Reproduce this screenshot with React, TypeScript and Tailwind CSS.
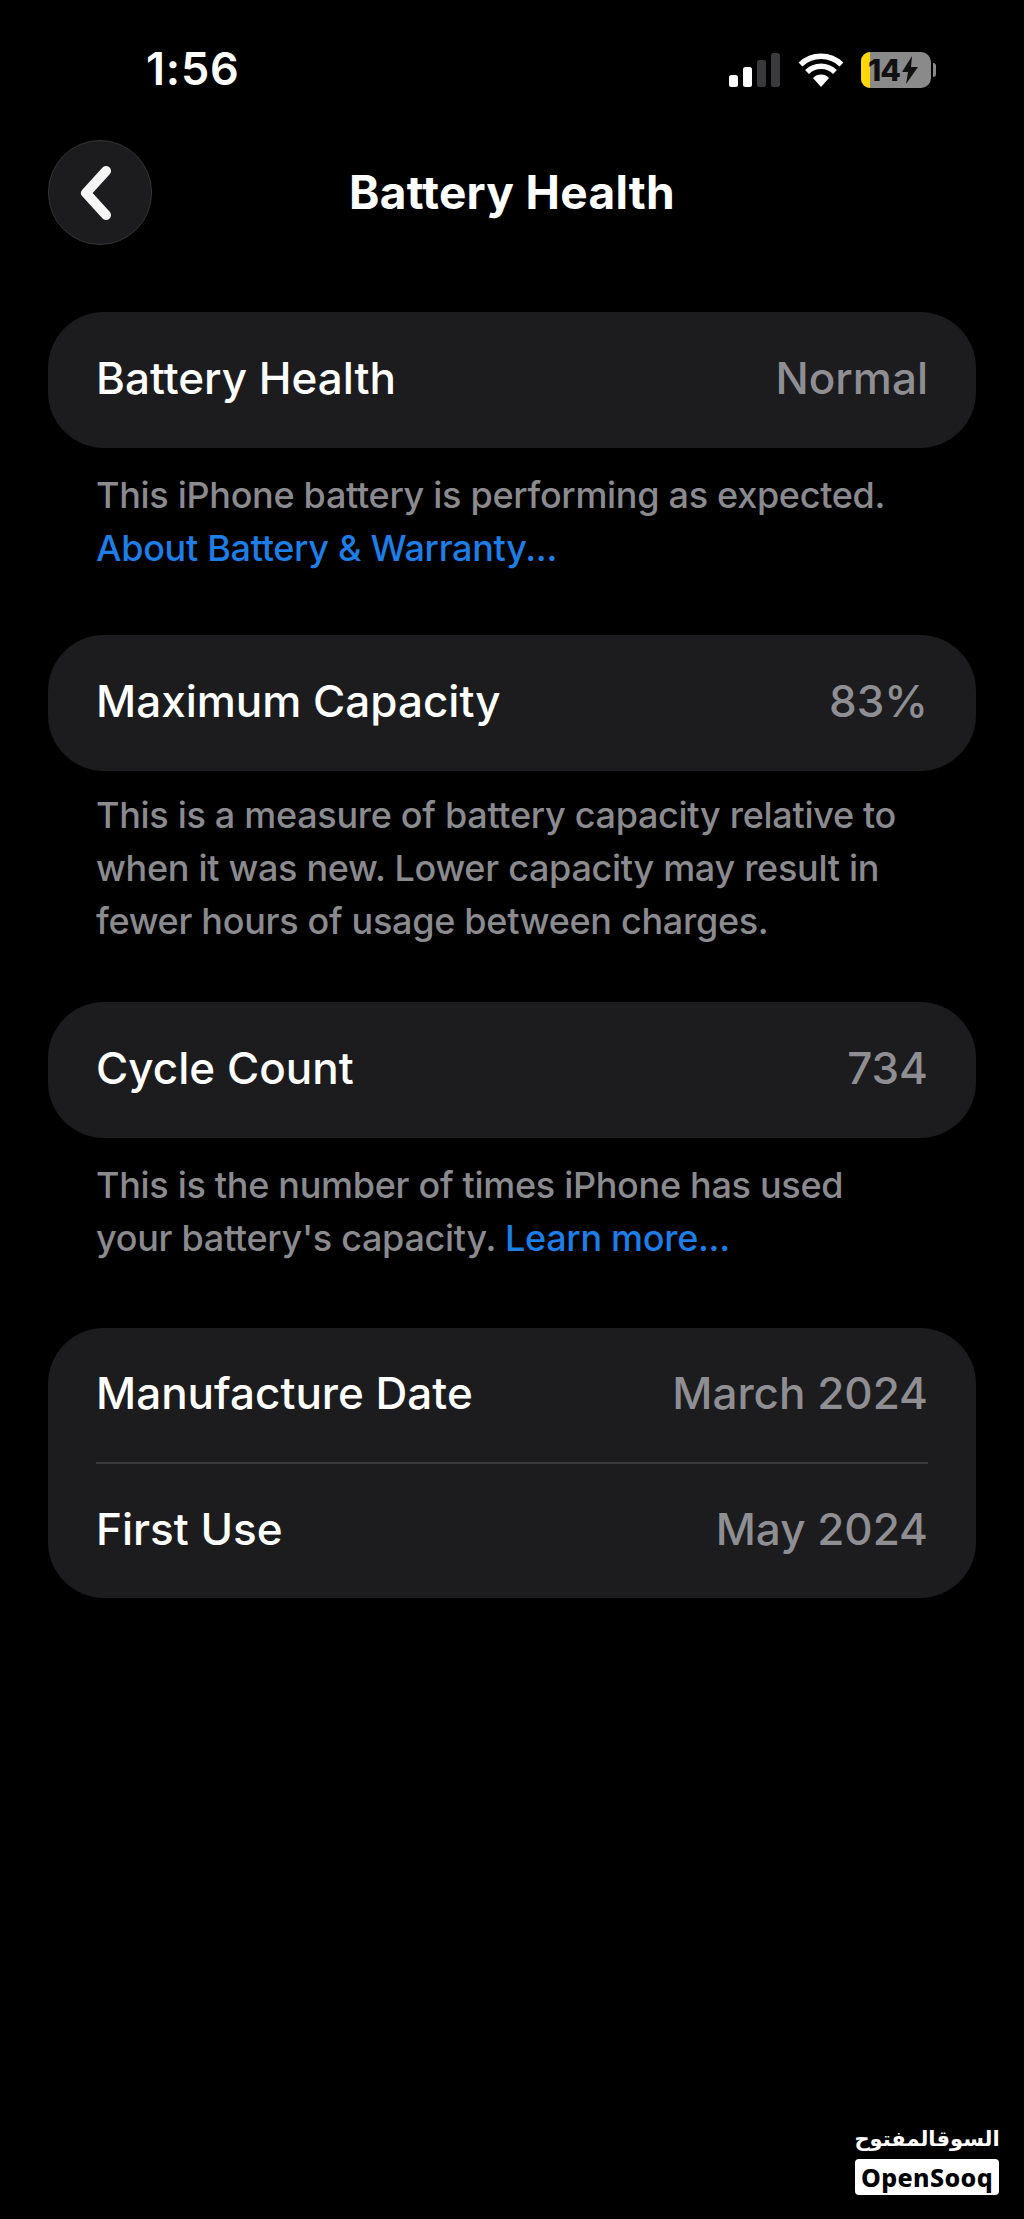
import type { ReactNode } from "react";

const FONT = "font-['Inter',sans-serif]";

function Row({ label, value, compact }: { label: string; value: string; compact?: boolean }) {
  return (
    <div className={`flex items-center justify-between pb-[4px] ${compact ? "h-[134px]" : "h-[136px]"}`}>
      <span className="text-[44px] font-medium text-white">{label}</span>
      <span className="text-[44px] font-medium text-[#8e8e93]">{value}</span>
    </div>
  );
}

function Card({ children }: { children: ReactNode }) {
  return <div className="rounded-[56px] bg-[#1c1c1e] px-[48px]">{children}</div>;
}

function Note({ children, tight }: { children: ReactNode; tight?: boolean }) {
  return (
    <p
      className={`px-[48px] text-[36px] font-medium leading-[53px] tracking-[-0.3px] text-[#8a8a8f] ${
        tight ? "pt-[18px]" : "pt-[21px]"
      }`}
    >
      {children}
    </p>
  );
}

function Link({ children }: { children: ReactNode }) {
  return <span className="text-[#1c7ee6]">{children}</span>;
}

function StatusBar() {
  return (
    <div className="flex h-[100px] items-end justify-between pb-[9px] pl-[146px] pr-[88px]">
      <span className="text-[45px] font-semibold leading-none tracking-[0.8px] text-white">1:56</span>
      <div className="mb-[3px] flex items-center gap-[17px]">
        <svg width="52" height="34" viewBox="0 0 52 34" aria-hidden="true">
          <rect x="0" y="22" width="9" height="12" rx="2.5" fill="#fff" />
          <rect x="14" y="14" width="9" height="20" rx="2.5" fill="#fff" />
          <rect x="28" y="7" width="9" height="27" rx="2.5" fill="#3a3a3c" />
          <rect x="42" y="0" width="9" height="34" rx="2.5" fill="#3a3a3c" />
        </svg>
        <svg width="46" height="34" viewBox="0 0 46 34" aria-hidden="true">
          <path d="M23 34l-8-9a11 11 0 0 1 16 0z" fill="#fff" />
          <path d="M9 19a20 20 0 0 1 28 0" fill="none" stroke="#fff" strokeWidth="5.5" />
          <path d="M2.5 11.5a29.5 29.5 0 0 1 41 0" fill="none" stroke="#fff" strokeWidth="5.5" />
        </svg>
        <div className="flex items-center gap-[2px]">
          <div className="relative flex h-[36px] w-[70px] items-center rounded-[10px] bg-[#8a8a8a]">
            <div className="absolute inset-y-0 left-0 w-[9px] rounded-l-[10px] bg-[#ffd60a]" />
            <span className="relative pl-[7px] text-[30px] font-extrabold leading-none tracking-[-1px] text-[#111]">14</span>
            <svg className="relative ml-[2px]" width="16" height="28" viewBox="0 0 16 28" aria-hidden="true">
              <path d="M10 0L0 16h6l-2 12L16 11H9z" fill="#111" />
            </svg>
          </div>
          <div className="h-[14px] w-[3px] rounded-r-full bg-[#8a8a8a]" />
        </div>
      </div>
    </div>
  );
}

export default function App() {
  return (
    <div className={`relative min-h-[2219px] bg-black ${FONT}`}>
      <StatusBar />

      <div className="relative flex h-[212px] items-center justify-center pb-[28px]">
        <button
          type="button"
          className="absolute left-[48px] top-[40px] flex h-[105px] w-[104px] items-center justify-center rounded-full border border-[#333] bg-[#1c1c1e]"
        >
          <svg width="40" height="56" viewBox="0 0 40 56" aria-hidden="true">
            <path d="M26 6L6 28l20 22" fill="none" stroke="#f5f5f5" strokeWidth="10" strokeLinecap="round" strokeLinejoin="round" />
          </svg>
        </button>
        <h1 className="text-[46px] font-bold tracking-[0.3px] text-white">Battery Health</h1>
      </div>

      <div className="px-[48px]">
        <Card>
          <Row label="Battery Health" value="Normal" />
        </Card>
        <Note>
          This iPhone battery is performing as expected.
          <br />
          <Link>About Battery &amp; Warranty...</Link>
        </Note>

        <div className="mt-[60px]">
          <Card>
            <Row label="Maximum Capacity" value="83%" />
          </Card>
        </div>
        <Note tight>
          This is a measure of battery capacity relative to
          <br />
          when it was new. Lower capacity may result in
          <br />
          fewer hours of usage between charges.
        </Note>

        <div className="mt-[54px]">
          <Card>
            <Row label="Cycle Count" value="734" />
          </Card>
        </div>
        <Note>
          This is the number of times iPhone has used
          <br />
          your battery's capacity. <Link>Learn more...</Link>
        </Note>

        <div className="mt-[63px]">
          <Card>
            <Row label="Manufacture Date" value="March 2024" compact />
            <div className="h-[2px] bg-[#3a3a3c]" />
            <Row label="First Use" value="May 2024" compact />
          </Card>
        </div>
      </div>

      {/* watermark */}
      <div className="absolute bottom-[24px] right-[25px] flex w-[144px] flex-col items-center">
        <span className="whitespace-nowrap font-['DejaVu_Sans',sans-serif] text-[21px] font-bold leading-[40px] text-white">السوقالمفتوح</span>
        <div className="flex h-[36px] w-full items-center justify-center rounded-[4px] bg-white">
          <span className="font-['Noto_Sans',sans-serif] text-[25px] font-extrabold leading-none tracking-[0.4px] text-black">OpenSooq</span>
        </div>
      </div>
    </div>
  );
}
